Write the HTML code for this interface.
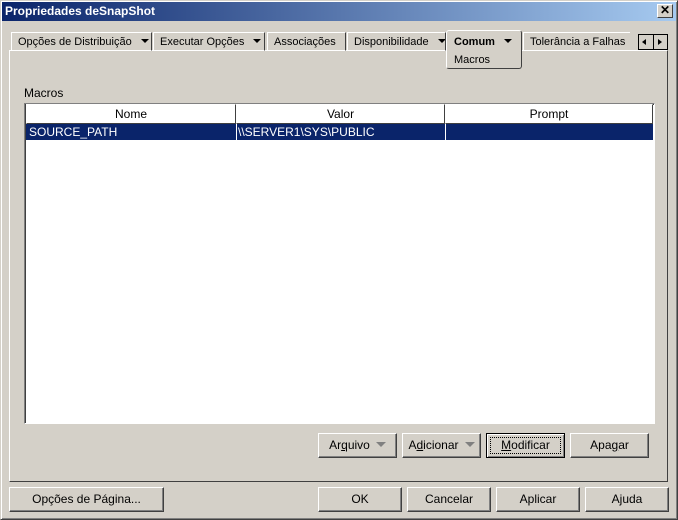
<!DOCTYPE html>
<html><head><style>
*{box-sizing:border-box;margin:0;padding:0}
body{width:678px;height:520px;background:#d4d0c8;font:12px "Liberation Sans",sans-serif;position:relative;overflow:hidden}
.abs{position:absolute}
.frame{left:0;top:0;width:678px;height:520px;border:1px solid;border-color:#d4d0c8 #404040 #404040 #d4d0c8;box-shadow:inset 1px 1px #fff,inset -1px -1px #808080}
.title{left:2px;top:2px;width:674px;height:19px;background:linear-gradient(90deg,#0a246a,#a6caf0);color:#fff;font-weight:bold;font-size:12px;line-height:19px;padding-left:3px}
.x{right:5px;top:4px;width:16px;height:14px;background:#d4d0c8;border:1px solid;border-color:#fff #404040 #404040 #fff;color:#000;font-size:12px;line-height:11px;text-align:center;font-weight:bold}
.tab{top:32px;height:19px;border:1px solid;border-color:#fff #404040 transparent #fff;line-height:19px;padding-left:6px;font-size:11px;white-space:nowrap;overflow:hidden}
.arr{display:inline-block;width:0;height:0;border:4px solid transparent;border-top:4px solid #000;border-bottom:0;margin-left:9px;vertical-align:2px}
.panel{left:9px;top:50px;width:659px;height:432px;border:1px solid;border-color:#fff #404040 #404040 #fff}
.btn{height:25px;border:1px solid;border-color:#fff #404040 #404040 #fff;box-shadow:inset -1px -1px #808080;text-align:center;line-height:23px;font-size:12px}
.garr{display:inline-block;width:0;height:0;border:5px solid transparent;border-top:5px solid #808080;border-bottom:0;margin-left:6px;vertical-align:2px}
.hd{top:0;height:20px;border:1px solid;border-color:#fff #404040 #404040 #fff;text-align:center;line-height:18px}
</style></head><body>
<div class="abs frame"></div>
<div class="abs title">Propriedades deSnapShot</div>
<div class="abs x">✕</div>

<div class="abs panel"></div>
<div class="abs tab" style="left:11px;width:141px">Opções de Distribuição<span class="arr"></span></div>
<div class="abs tab" style="left:153px;width:112px">Executar Opções<span class="arr"></span></div>
<div class="abs tab" style="left:267px;width:79px">Associações</div>
<div class="abs tab" style="left:347px;width:99px">Disponibilidade<span class="arr"></span></div>
<div class="abs tab" style="left:523px;width:107px;border-right:none">Tolerância a Falhas</div>
<div class="abs" style="left:446px;top:30px;width:76px;height:39px;background:#d4d0c8;border:1px solid;border-color:#fff #404040 #404040 #fff;border-radius:3px;padding-left:7px;font-size:11px;line-height:18px;padding-top:2px"><b>Comum</b><span class="arr"></span><br>Macros</div>
<div class="abs" style="left:638px;top:34px;width:30px;height:16px;border:1px solid #000;background:#d4d0c8">
<div class="abs" style="left:3px;top:4px;border:3px solid transparent;border-right:4px solid #000;border-left:0"></div>
<div class="abs" style="left:14px;top:-1px;width:1px;height:16px;background:#000"></div>
<div class="abs" style="left:19px;top:4px;border:3px solid transparent;border-left:4px solid #000;border-right:0"></div>
</div>

<div class="abs" style="left:24px;top:86px">Macros</div>
<div class="abs" style="left:24px;top:103px;width:631px;height:321px;background:#fff;border:1px solid;border-color:#808080 #fff #fff #808080;box-shadow:inset 1px 1px #404040">
<div class="abs hd" style="left:1px;width:210px">Nome</div>
<div class="abs hd" style="left:211px;width:209px">Valor</div>
<div class="abs hd" style="left:420px;width:208px">Prompt</div>
<div class="abs" style="left:1px;top:20px;width:627px;height:16px;background:#0a246a;color:#fff;line-height:16px">
<span class="abs" style="left:3px">SOURCE_PATH</span>
<span class="abs" style="left:210px;width:1px;height:16px;background:#fff"></span>
<span class="abs" style="left:212px">\\SERVER1\SYS\PUBLIC</span>
<span class="abs" style="left:419px;width:1px;height:16px;background:#fff"></span>
</div>
</div>

<div class="abs btn" style="left:318px;top:433px;width:79px">Ar<u>q</u>uivo<span class="garr"></span></div>
<div class="abs btn" style="left:402px;top:433px;width:79px">A<u>d</u>icionar<span class="garr"></span></div>
<div class="abs btn" style="left:486px;top:433px;width:79px;border:1px solid #000;box-shadow:inset 1px 1px #fff,inset -1px -1px #808080"><span style="outline:1px dotted #000;padding:0 10px 1px"><u>M</u>odificar</span></div>
<div class="abs btn" style="left:570px;top:433px;width:79px">Apa<u>g</u>ar</div>

<div class="abs btn" style="left:9px;top:487px;width:155px">Opções de Pá<u>g</u>ina...</div>
<div class="abs btn" style="left:318px;top:487px;width:84px">OK</div>
<div class="abs btn" style="left:407px;top:487px;width:84px">Cancelar</div>
<div class="abs btn" style="left:496px;top:487px;width:84px">Aplicar</div>
<div class="abs btn" style="left:585px;top:487px;width:84px">A<u>j</u>uda</div>
</body></html>
